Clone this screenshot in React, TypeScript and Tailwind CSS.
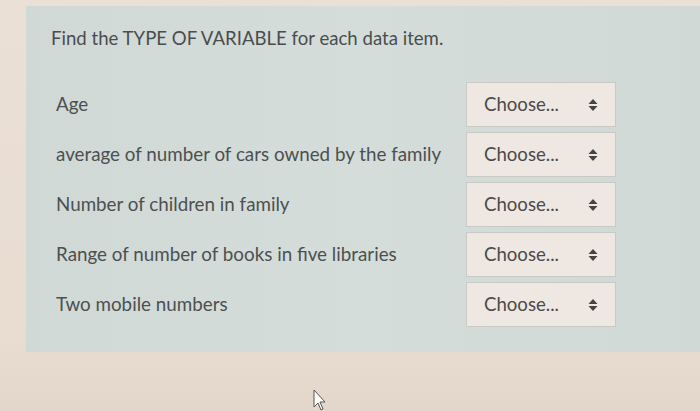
import React from "react";

const rows = [
  "Age",
  "average of number of cars owned by the family",
  "Number of children in family",
  "Range of number of books in five libraries",
  "Two mobile numbers",
];

function Arrows() {
  return (
    <svg width="10" height="14" viewBox="0 0 10 14" className="shrink-0">
      <path d="M5 1 L9.5 6 L0.5 6 Z" fill="#444" />
      <path d="M5 13 L9.5 8 L0.5 8 Z" fill="#444" />
    </svg>
  );
}

export default function App() {
  return (
    <div
      className="relative w-[700px] h-[411px] overflow-hidden bg-[linear-gradient(180deg,#ebe0d6_0%,#e9ddd2_80%,#e3d6ca_100%)] pl-[26px] pt-[6px]"
      style={{ fontFamily: "Lato, 'Open Sans', sans-serif" }}
    >
      <div className="w-[674px] h-[346px] bg-[linear-gradient(90deg,#d1d9d6_0%,#d5ddda_50%,#d0d9d6_100%)] pl-[25px] pt-[19px]">
        <div className="text-[18.6px] leading-[26px] text-[#4a4d4d]">
          Find the TYPE OF VARIABLE for each data item.
        </div>
        <div className="mt-[31px] flex flex-col gap-[5px]">
          {rows.map((r) => (
            <div key={r} className="flex items-center h-[45px]">
              <div className="w-[415px] pl-[5px] text-[18.8px] text-[#4c5050]">{r}</div>
              <div className="w-[150px] h-[45px] bg-[#efe7e1] border border-[#c9c9c5] flex items-center justify-between pl-[17px] pr-[17px] text-[18.6px] text-[#4a4a4a]">
                <span>Choose...</span>
                <Arrows />
              </div>
            </div>
          ))}
        </div>
      </div>
      <svg
        className="absolute left-[313px] top-[389px]"
        width="14"
        height="22"
        viewBox="0 0 14 22"
      >
        <path d="M1 1 L1 18 L5 14 L8 21 L10 20 L7 13 L12 13 Z" fill="#ffffff" stroke="#555" strokeWidth="1" />
      </svg>
    </div>
  );
}
